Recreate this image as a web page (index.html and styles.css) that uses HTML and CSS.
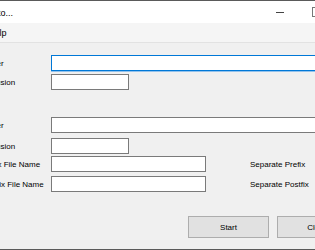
FILE: index.html
```html
<!DOCTYPE html>
<html lang="en">
<head>
    <meta charset="UTF-8">
    <title>Auto...</title>
    <link rel="stylesheet" href="styles.css">
</head>
<body>
    <div class="window">
        <div class="titlebar">
            <span class="title">Auto...</span>
            <span class="min-btn"></span>
            <span class="max-btn"></span>
        </div>
        <div class="menubar">
            <span class="menu-item">Help</span>
        </div>

        <div class="form">
            <div class="row row-1">
                <label>Folder</label>
                <input type="text" class="box wide focused">
            </div>
            <div class="row row-2">
                <label>Exclusion</label>
                <input type="text" class="box short">
            </div>

            <div class="row row-3">
                <label>Folder</label>
                <input type="text" class="box wide">
            </div>
            <div class="row row-4">
                <label>Exclusion</label>
                <input type="text" class="box short">
            </div>

            <div class="row row-5">
                <label>Prefix File Name</label>
                <input type="text" class="box medium">
                <span class="option">Separate Prefix</span>
            </div>
            <div class="row row-6">
                <label>Postfix File Name</label>
                <input type="text" class="box medium">
                <span class="option">Separate Postfix</span>
            </div>

            <div class="buttons">
                <button type="button">Start</button>
                <button type="button">Close</button>
            </div>
        </div>
    </div>
</body>
</html>
```

FILE: styles.css
```css
body {
    margin: 0;
    padding: 0;
    width: 315px;
    height: 250px;
    overflow: hidden;
    background-color: #f0f0f0;
    font-family: "Liberation Sans", Arial, sans-serif;
    font-size: 8px;
    color: #000;
}

.window {
    height: 248px;
    border-top: 1px solid #5a5a5a;
    border-bottom: 1px solid #5a5a5a;
    overflow: hidden;
}

.titlebar {
    height: 22px;
    background-color: #fff;
    display: flex;
    align-items: center;
}

.title {
    margin-left: -13px;
    margin-top: 2px;
    font-size: 9px;
    white-space: nowrap;
}

.min-btn {
    margin-left: auto;
    margin-right: 28px;
    width: 8px;
    height: 1px;
    background-color: #444;
}

.max-btn {
    width: 8px;
    height: 8px;
    border: 1px solid #777;
    margin-right: -7px;
    flex-shrink: 0;
}

.menubar {
    height: 19px;
    background-color: #f5f5f5;
    border-bottom: 1px solid #e2e2e2;
    display: flex;
    align-items: center;
}

.menu-item {
    margin-left: -12px;
    font-size: 9px;
    white-space: nowrap;
}

.form {
    display: flex;
    flex-direction: column;
}

.row {
    display: flex;
    align-items: center;
    height: 16px;
    white-space: nowrap;
}

.row label {
    width: 70px;
    margin-left: -19px;
    flex-shrink: 0;
}

.row-1 { margin-top: 12px; }
.row-2 { margin-top: 3px; }
.row-3 { margin-top: 27px; }
.row-4 { margin-top: 5px; }
.row-5 { margin-top: 2px; }
.row-6 { margin-top: 4px; }

.box {
    box-sizing: border-box;
    height: 16px;
    margin: 0;
    padding: 0 2px;
    border: 1px solid #7a7a7a;
    background-color: #fff;
    font: inherit;
    flex-shrink: 0;
}

.box.focused {
    border-color: #0078d7;
    box-shadow: 0 1px 0 #93c2ec;
}

.wide {
    width: 280px;
}

.short {
    width: 78px;
}

.medium {
    width: 155px;
}

.option {
    margin-left: 44px;
}

.buttons {
    display: flex;
    gap: 8px;
    margin-top: 24px;
    padding-left: 188px;
}

.buttons button {
    width: 81px;
    height: 22px;
    flex-shrink: 0;
    background-color: #e1e1e1;
    border: 1px solid #adadad;
    font: inherit;
    color: #000;
    padding: 0;
}
```
